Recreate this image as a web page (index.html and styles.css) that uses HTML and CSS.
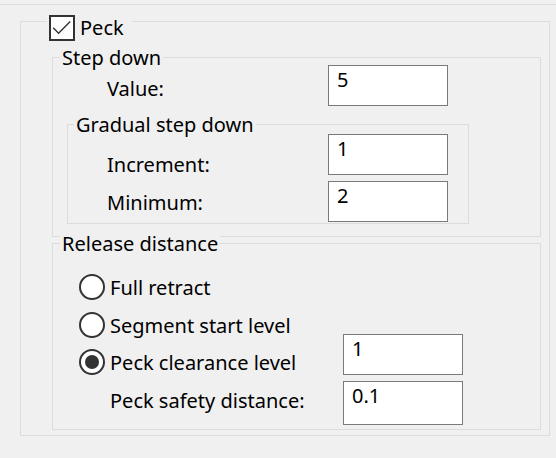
FILE: index.html
```html
<!DOCTYPE html>
<html lang="en">
<head>
  <meta charset="UTF-8" />
  <title>Peck</title>
  <link rel="stylesheet" href="styles.css">
</head>
<body>
  <div class="frame">
    <section class="group group-peck">
      <div class="group-title peck-title">
        <span class="checkbox">
          <svg width="22" height="22" viewBox="0 0 22 22">
            <path d="M2.2 10.8 L7.6 16.2 L19.2 4.6" fill="none" stroke="#333" stroke-width="1.4" />
          </svg>
        </span>
        <span class="peck-label">Peck</span>
      </div>

      <section class="group group-step">
        <div class="group-title step-title">Step down</div>
        <div class="field field-value">
          <label>Value:</label>
          <input type="text" value="5">
        </div>

        <section class="group group-gradual">
          <div class="group-title gradual-title">Gradual step down</div>
          <div class="field field-increment">
            <label>Increment:</label>
            <input type="text" value="1">
          </div>
          <div class="field field-minimum">
            <label>Minimum:</label>
            <input type="text" value="2">
          </div>
        </section>
      </section>

      <section class="group group-release">
        <div class="group-title release-title">Release distance</div>
        <div class="option option-first"><span class="radio"></span>Full retract</div>
        <div class="option option-second"><span class="radio"></span>Segment start level</div>
        <div class="field field-clearance">
          <div class="option"><span class="radio checked"></span>Peck clearance level</div>
          <input type="text" value="1">
        </div>
        <div class="field field-safety">
          <label>Peck safety distance:</label>
          <input type="text" value="0.1">
        </div>
      </section>
    </section>
  </div>
</body>
</html>
```
FILE: styles.css
```css
* {
  box-sizing: border-box;
}

body {
  margin: 0;
  background: #f0f0f0;
  color: #000;
  font-family: "Noto Sans", "Open Sans", sans-serif;
  font-size: 20px;
  line-height: 27px;
}

.frame {
  margin-top: 4px;
  border-top: 1px solid #dcdcdc;
  padding: 16px 0 0 20px;
}

.group {
  border: 1px solid #dcdcdc;
}

.group-title {
  width: fit-content;
  margin-top: -14px;
  padding: 0 2px;
  background: #f0f0f0;
  white-space: nowrap;
}

/* outer box with the checkbox title */
.group-peck {
  width: 530px;
  padding: 0 8px 5px 31px;
}

.peck-title {
  display: flex;
  align-items: center;
  margin: -8px 0 0 -5px;
  padding: 0 8px 0 2px;
}

.checkbox {
  width: 26px;
  height: 26px;
  border: 2px solid #333;
  background: #fff;
  display: flex;
  align-items: center;
  justify-content: center;
}

.peck-label {
  margin-left: 5px;
}

.group-step {
  margin-top: 16px;
  padding-bottom: 12px;
}

.step-title,
.release-title {
  margin-left: 7px;
}

.step-title {
  margin-bottom: -6px;
}

.field {
  display: flex;
  align-items: flex-start;
}

.field label {
  width: 221px;
}

input[type="text"] {
  width: 120px;
  height: 41px;
  margin: 0;
  padding: 0 8px 12px;
  border: 1px solid #7a7a7a;
  border-radius: 0;
  background: #fff;
  color: #000;
  font: inherit;
  line-height: 27px;
  outline: none;
}

.field-value {
  padding-left: 54px;
}

.field-value label {
  margin-top: 10px;
}

.group-gradual {
  width: 402px;
  margin: 18px 0 0 14px;
  padding-bottom: 1px;
}

.gradual-title {
  margin: -14px 0 -4px 6px;
}

.field-increment,
.field-minimum {
  padding-left: 39px;
}

.field-increment label {
  margin: 17px 0 -3px;
}

.field-minimum {
  margin-top: 6px;
}

.field-minimum label {
  margin-top: 8px;
}

/* release distance */
.group-release {
  margin-top: 6px;
  padding: 0 0 4px 26px;
}

.release-title {
  margin-left: -19px;
}

.option {
  display: flex;
  align-items: center;
  height: 26px;
  white-space: nowrap;
}

.radio {
  width: 26px;
  height: 26px;
  margin-right: 5px;
  border: 2px solid #333;
  border-radius: 50%;
  background: #fff;
  display: flex;
  align-items: center;
  justify-content: center;
}

.radio.checked::after {
  content: "";
  width: 14px;
  height: 14px;
  border-radius: 50%;
  background: #333;
}

.option-first {
  margin-top: 17px;
}

.option-second {
  margin-top: 12px;
}

.field-clearance {
  margin-top: -4px;
}

.field-clearance .option {
  width: 264px;
  margin-top: 15px;
}

.field-safety {
  margin-top: 6px;
  padding-left: 31px;
}

.field-safety label {
  width: 233px;
  margin-top: 6px;
}

.field-safety input[type="text"] {
  height: 44px;
  padding-bottom: 15px;
}
```
